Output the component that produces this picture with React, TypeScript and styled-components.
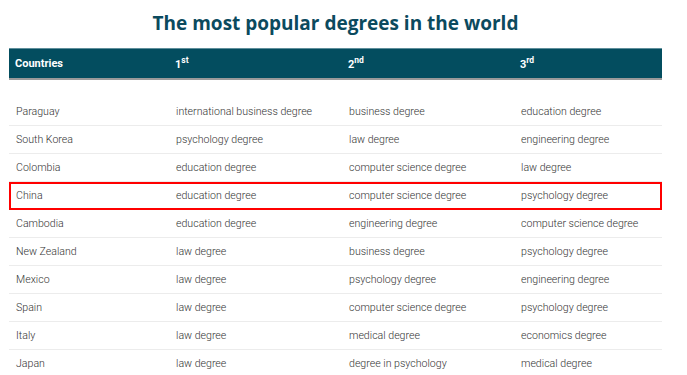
import styled, { createGlobalStyle } from 'styled-components'

const GlobalStyle = createGlobalStyle`
  body {
    margin: 0;
    background: #fff;
    font-family: Roboto, "Liberation Sans", sans-serif;
  }
`

const Page = styled.div`
  width: 687px;
  padding: 8px 25px 0 9px;
  box-sizing: border-box;
`

const Title = styled.h1`
  margin: 0 0 10px;
  height: 30px;
  line-height: 30px;
  text-align: center;
  font-family: "Open Sans", sans-serif;
  font-weight: 700;
  font-size: 19px;
  color: #0b4a5e;
`

const Table = styled.table`
  width: 653px;
  border-collapse: collapse;
  table-layout: fixed;
`

const HeadRow = styled.tr`
  background: #034d5f;
  box-shadow: 0 2px 0 #9a9a9a;
`

const HeadCell = styled.th<{ $w: number }>`
  box-sizing: border-box;
  width: ${(p) => p.$w}px;
  height: 29px;
  padding: 0 6px;
  text-align: left;
  font-weight: 700;
  font-size: 11px;
  color: #fff;
  border-top: 1px solid #5f8f9b;

  sup {
    font-size: 8.5px;
    vertical-align: 5px;
  }
`

const Spacer = styled.tr`
  height: 20px;
`

const Row = styled.tr<{ $mark?: boolean }>`
  height: 28px;
  border-bottom: 1px solid #ececec;
  outline: ${(p) => (p.$mark ? '2px solid #f00' : 'none')};
  outline-offset: -2px;

  &:last-child {
    border-bottom: none;
  }
`

const Cell = styled.td`
  padding: 0 7px;
  font-size: 10.6px;
  font-weight: 300;
  color: #333;
  white-space: nowrap;
`

const rows = [
  ['Paraguay', 'international business degree', 'business degree', 'education degree'],
  ['South Korea', 'psychology degree', 'law degree', 'engineering degree'],
  ['Colombia', 'education degree', 'computer science degree', 'law degree'],
  ['China', 'education degree', 'computer science degree', 'psychology degree'],
  ['Cambodia', 'education degree', 'engineering degree', 'computer science degree'],
  ['New Zealand', 'law degree', 'business degree', 'psychology degree'],
  ['Mexico', 'law degree', 'psychology degree', 'engineering degree'],
  ['Spain', 'law degree', 'computer science degree', 'psychology degree'],
  ['Italy', 'law degree', 'medical degree', 'economics degree'],
  ['Japan', 'law degree', 'degree in psychology', 'medical degree'],
]

export default function App() {
  return (
    <>
      <GlobalStyle />
      <Page>
        <Title>The most popular degrees in the world</Title>
        <Table>
          <thead>
            <HeadRow>
              <HeadCell $w={160}>Countries</HeadCell>
              <HeadCell $w={173}>
                1<sup>st</sup>
              </HeadCell>
              <HeadCell $w={172}>
                2<sup>nd</sup>
              </HeadCell>
              <HeadCell $w={148}>
                3<sup>rd</sup>
              </HeadCell>
            </HeadRow>
          </thead>
          <tbody>
            <Spacer />
            {rows.map((r) => (
              <Row key={r[0]} $mark={r[0] === 'China'}>
                {r.map((c, i) => (
                  <Cell key={i}>{c}</Cell>
                ))}
              </Row>
            ))}
          </tbody>
        </Table>
      </Page>
    </>
  )
}
